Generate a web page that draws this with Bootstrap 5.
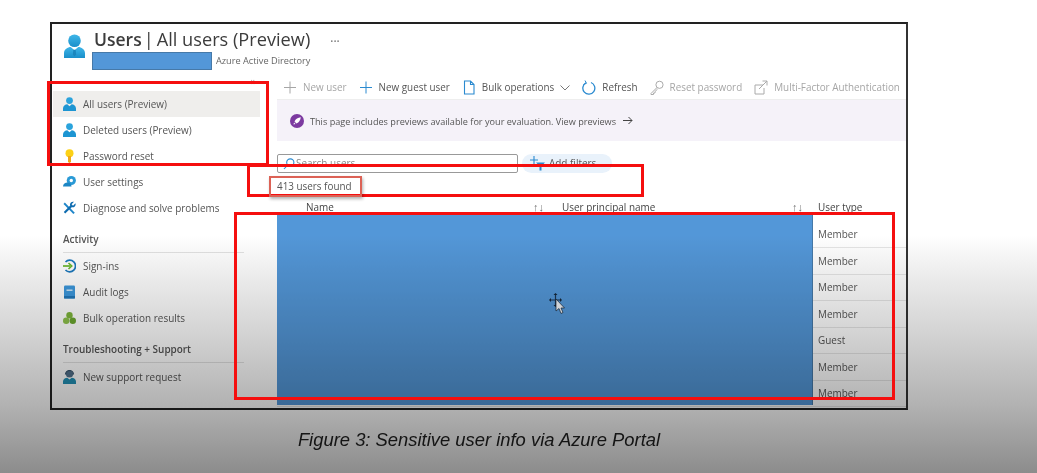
<!DOCTYPE html>
<html lang="en">
<head>
  <meta charset="UTF-8" />
  <meta name="viewport" content="width=device-width, initial-scale=1.0"/>
  <title>Users | All users (Preview)</title>
  <link href="https://cdn.jsdelivr.net/npm/bootstrap@5.3.0/dist/css/bootstrap.min.css" rel="stylesheet" />
  <style>
    html, body { height: 473px; overflow: hidden; }
    body { background: #fff; padding: 22px 129px 0 50px; font-family: "Open Sans", "Liberation Sans", sans-serif; color: #555; }

    .shot-frame { height: 388px; border: 2px solid #222; border-right-color: #333; background: #fff; overflow: hidden; filter: blur(.45px); }
    .portal-head { height: 51px; padding: 10px 0 0 12px; }
    .head-icon { width: 21px; height: 24px; margin-right: 9px; flex: none; }
    .portal-title { font-size: 18.2px; line-height: 22px; color: #3c3c3c; margin: -6px 0 0; font-weight: 400; white-space: nowrap; }
    .portal-title b { font-size: 17.5px; font-weight: 600; }
    .title-bar { margin: 0 3px 0 2px; }
    .title-dots { margin-left: 20px; font-size: 12px; color: #666; }
    .redact-name { display: inline-block; width: 120px; height: 18px; background: #5397d8; border: 1px solid #4679a8; margin: 0 4px 0 -2px; }
    .portal-sub { font-size: 9.2px; line-height: 18px; color: #666; margin-top: -1px; }

    .side-nav { width: 225px; flex: none; padding-right: 17px; }
    .collapse-mark { height: 16px; line-height: 12px; font-size: 11px; color: #aaa; text-align: right; padding-right: 5px; }
    .side-link { height: 26px; padding: 1px 0 0 11px; gap: 7px; font-size: 9.95px; color: #555; white-space: nowrap; }
    .side-link svg { width: 13px; height: 14px; flex: none; margin-top: -1px; }
    .side-link.is-current { background: #efeeec; color: #555; margin-left: 1px; padding-left: 10px; }
    .side-head { margin-left: 11px; width: 181px; height: 32px; padding-top: 8px; line-height: 20px; font-size: 9.95px; font-weight: 600; color: #555; border-bottom: 1px solid #e2e2e2; white-space: nowrap; }
    .after-head { margin-top: 1px; }

    .portal-main { min-width: 0; }
    .tool-bar { height: 25px; padding: 1px 0 0 6px; gap: 12px; font-size: 9.9px; white-space: nowrap; border-bottom: 1px solid #eee; }
    .tool-item { gap: 6px; color: #555; }
    .tool-item.is-off { color: #a6a6a6; }
    .tool-item svg { width: 14px; height: 15px; flex: none; }
    .tool-item svg.drop-arrow { width: 10px; height: 6px; }
    .plus-on { color: #2a8ad0; }
    .preview-note { height: 41px; background: #f5f2f9; padding: 2px 0 0 13px; gap: 6px; font-size: 9.15px; color: #555; white-space: nowrap; }
    .preview-note svg { width: 14px; height: 14px; margin-top: -2px; }
    .preview-note svg.go-arrow { width: 10px; height: 9px; margin-left: 1px; }
    .search-row { margin-top: 13px; height: 19px; gap: 4px; }
    .search-box { width: 241px; border: 1px solid #999; border-radius: 2px; padding-left: 5px; gap: 1px; font-size: 9.95px; color: #888; }
    .filter-pill { width: 90px; height: 19px; border-radius: 10px; background: #e9f2fb; padding-left: 8px; gap: 4px; font-size: 9.95px; color: #555; }
    .found-line { height: 24px; line-height: 26px; font-size: 9.9px; color: #555; }
    .user-table { font-size: 9.95px; table-layout: fixed; width: 630px; margin: 0; color: #555; }
    .user-table th { height: 24px; padding: 0; font-weight: 500; vertical-align: top; line-height: 20px; border: 0; color: #444; white-space: nowrap; }
    .user-table td { height: 26.5px; padding: 1px 0 0 5px; vertical-align: middle; border-bottom: 1px solid #e6e6e6; color: #555; }
    .sort-mark { float: right; padding-right: 10px; font-size: 11px; color: #777; font-weight: 400; }

    .redact-rows { position: absolute; left: 277px; top: 213px; width: 536px; height: 192px; background: #5397d8; border-right: 1px solid #4679a8; }
    .shade-layer { position: absolute; inset: 0; pointer-events: none; mix-blend-mode: multiply;
      background: linear-gradient(to bottom, #fff 0, #fff 235px, #ececec 275px, #d0d0d0 340px, #b2b2b2 405px, #8c8c8c 473px); }
    .red-mark { position: absolute; border: 3px solid #f50f0f; pointer-events: none; }
    .mark-menu { left: 47px; top: 81px; width: 222px; height: 85px; }
    .mark-search { left: 247px; top: 164px; width: 397px; height: 33px; }
    .mark-rows { left: 234px; top: 212px; width: 661px; height: 188px; }
    .found-mark { position: absolute; left: 269px; top: 176px; width: 93px; height: 21px; border: 2px solid #dc6256; box-shadow: 1px 2px 3px rgba(0,0,0,.3); pointer-events: none; }
    .move-cursor { position: absolute; left: 548px; top: 293px; width: 17px; height: 23px; }
    .fig-caption { position: relative; margin-top: 19px; text-align: center; font-family: "Liberation Sans", Arial, sans-serif; font-style: italic; font-size: 18.4px; line-height: 22px; color: #222; }
  </style>
</head>
<body class="position-relative">

  <svg width="0" height="0" class="position-absolute">
    <defs>
      <linearGradient id="blueGrad" x1="0" y1="0" x2="0" y2="1">
        <stop offset="0" stop-color="#3fb6e8"/><stop offset="1" stop-color="#1a8fca"/>
      </linearGradient>
    </defs>
    <symbol id="ico-user-big" viewBox="0 0 22 25">
      <circle cx="11" cy="7" r="6.6" fill="url(#blueGrad)"/>
      <path d="M0 25v-5c0-4 4-6.500 7-6.500l4 3.500 4-3.500c3 0 7 2.500 7 6.500v5z" fill="url(#blueGrad)"/>
      <path d="M9.800 16.500h2.400l.5 5-1.700 2-1.700-2z" fill="#1b86bd"/>
    </symbol>
    <symbol id="ico-user" viewBox="0 0 13 14">
      <circle cx="6.500" cy="3.600" r="3.400" fill="#2aa3dc"/>
      <path d="M0 14v-2.500C0 9 2.200 7.300 4.300 7.300l2.200 2 2.200-2C10.800 7.300 13 9 13 11.500V14z" fill="#1d95d2"/>
    </symbol>
    <symbol id="ico-support" viewBox="0 0 13 14">
      <circle cx="6.500" cy="4" r="3.600" fill="#51708a"/>
      <path d="M2.500 4.500a4 4 0 0 1 8 0" fill="none" stroke="#37536b" stroke-width="1.200"/>
      <path d="M0 14v-2.500C0 9.200 2.200 7.800 4.300 7.800l2.200 1.700 2.200-1.700c2.100 0 4.300 1.400 4.300 3.700V14z" fill="#2390b4"/>
    </symbol>
    <symbol id="ico-key" viewBox="0 0 13 14">
      <circle cx="6.500" cy="4.200" r="4" fill="#fcd116"/>
      <path d="M5 7h3v6l-1.500 1L5 13z" fill="#f0a81a"/>
    </symbol>
    <symbol id="ico-gear" viewBox="0 0 13 14">
      <circle cx="8.300" cy="5.500" r="4.600" fill="#2a9ad6"/>
      <circle cx="8.300" cy="5.500" r="1.700" fill="#fff"/>
      <path d="M0 11.500c0-2.800 2.300-4 4.500-4s4 1.500 4 4z" fill="#1c86c4"/>
    </symbol>
    <symbol id="ico-tools" viewBox="0 0 13 14">
      <path d="M1.800 1.500l10 10.200-1.400 1.400L.5 3z" fill="#1f86c9"/>
      <path d="M12.500 2.200L10 4.700 8.600 3.300 11 .8C9 .2 7 1.500 7 3.500c0 .4 0 .7.200 1L.8 11l1.400 1.600 6.500-6.400c2.300.8 4.500-1.500 3.800-4z" fill="#0f6cb0"/>
    </symbol>
    <symbol id="ico-signin" viewBox="0 0 13 14">
      <path d="M2.500 3a5.800 5.800 0 1 1 0 8" fill="none" stroke="#1b78bd" stroke-width="1.700"/>
      <path d="M0 7h7.500" stroke="#68b82e" stroke-width="1.700"/>
      <path d="M5.500 4l3.200 3-3.200 3" fill="none" stroke="#68b82e" stroke-width="1.700"/>
    </symbol>
    <symbol id="ico-book" viewBox="0 0 13 14">
      <rect x="1" y="0.500" width="11" height="13" rx="1.200" fill="#3b97dc"/>
      <rect x="3.500" y="4.500" width="6" height="1.400" fill="#d6ecfa"/>
      <rect x="1" y="11" width="11" height="2.500" fill="#1f76b8"/>
    </symbol>
    <symbol id="ico-bulk" viewBox="0 0 13 14">
      <circle cx="6.500" cy="4.300" r="3.200" fill="#7cb43a"/>
      <circle cx="3.200" cy="9.800" r="3.200" fill="#8cc04a"/>
      <circle cx="9.800" cy="9.800" r="3.200" fill="#6aa62e"/>
    </symbol>
    <symbol id="ico-plus" viewBox="0 0 14 15">
      <path d="M7 1.500v12M1 7.500h12" fill="none" stroke="currentColor" stroke-width="1"/>
    </symbol>
    <symbol id="ico-doc" viewBox="0 0 14 15">
      <path d="M2.500 1h6l3.500 3.500V14h-9.500z M8.500 1v3.500H12" fill="none" stroke="#2a8ad0" stroke-width="1.100"/>
    </symbol>
    <symbol id="ico-refresh" viewBox="0 0 14 15">
      <path d="M4 2.800A6 6 0 1 0 9 2.500" fill="none" stroke="#2a8ad0" stroke-width="1.300"/>
      <path d="M3 0.500l1.500 2.800L1.500 4.500" fill="none" stroke="#2a8ad0" stroke-width="1"/>
    </symbol>
    <symbol id="ico-keyline" viewBox="0 0 14 15">
      <circle cx="9.500" cy="4.800" r="3.600" fill="none" stroke="#aaa" stroke-width="1"/>
      <path d="M7 7.500L1 13.500v1h2.500v-1.500H5v-1.500l2.500-2.300" fill="none" stroke="#aaa" stroke-width="1"/>
    </symbol>
    <symbol id="ico-ext" viewBox="0 0 14 15">
      <path d="M9 5H1v9h9V8" fill="none" stroke="#aaa" stroke-width="1"/>
      <path d="M5 9l8-8M8.500 1H13v4.500" fill="none" stroke="#aaa" stroke-width="1"/>
    </symbol>
    <symbol id="ico-rocket" viewBox="0 0 14 14">
      <circle cx="7" cy="7" r="7" fill="#7c3aa0"/>
      <path d="M10.800 3.200C8 3.500 5.500 5 4.500 7.500L6.500 9.500C9 8.500 10.500 6 10.800 3.200z" fill="#fff"/>
      <path d="M4 8.500l1.500 1.500-2 .5z" fill="#fff"/>
    </symbol>
    <symbol id="ico-search" viewBox="0 0 12 12">
      <circle cx="7.300" cy="4.500" r="3.600" fill="none" stroke="#2a8ad0" stroke-width="1.100"/>
      <path d="M4.700 7L1 11" stroke="#2a8ad0" stroke-width="1.100"/>
    </symbol>
    <symbol id="ico-filter" viewBox="0 0 15 15">
      <path d="M4 0v8M0 4h8" stroke="#2a8ad0" stroke-width="1.100"/>
      <path d="M6 6.500h9l-3.500 3.500v4.500h-2V10z" fill="#2a8ad0"/>
    </symbol>
  </svg>

  <div class="shot-frame d-flex flex-column">
    <header class="portal-head d-flex">
      <svg class="head-icon"><use href="#ico-user-big"/></svg>
      <div>
        <h1 class="portal-title"><b>Users</b><span class="title-bar">|</span>All users (Preview)<span class="title-dots">···</span></h1>
        <div class="portal-sub d-flex align-items-center"><span class="redact-name"></span>Azure Active Directory</div>
      </div>
    </header>

    <div class="d-flex flex-grow-1">
      <nav class="side-nav">
        <div class="collapse-mark">«</div>
        <a class="side-link is-current d-flex align-items-center text-decoration-none" href="#"><svg><use href="#ico-user"/></svg>All users (Preview)</a>
        <a class="side-link d-flex align-items-center text-decoration-none" href="#"><svg><use href="#ico-user"/></svg>Deleted users (Preview)</a>
        <a class="side-link d-flex align-items-center text-decoration-none" href="#"><svg><use href="#ico-key"/></svg>Password reset</a>
        <a class="side-link d-flex align-items-center text-decoration-none" href="#"><svg><use href="#ico-gear"/></svg>User settings</a>
        <a class="side-link d-flex align-items-center text-decoration-none" href="#"><svg><use href="#ico-tools"/></svg>Diagnose and solve problems</a>
        <div class="side-head">Activity</div>
        <a class="side-link d-flex align-items-center text-decoration-none" href="#"><svg><use href="#ico-signin"/></svg>Sign-ins</a>
        <a class="side-link d-flex align-items-center text-decoration-none" href="#"><svg><use href="#ico-book"/></svg>Audit logs</a>
        <a class="side-link d-flex align-items-center text-decoration-none" href="#"><svg><use href="#ico-bulk"/></svg>Bulk operation results</a>
        <div class="side-head">Troubleshooting + Support</div>
        <a class="side-link after-head d-flex align-items-center text-decoration-none" href="#"><svg><use href="#ico-support"/></svg>New support request</a>
      </nav>

      <main class="portal-main flex-grow-1">
        <div class="tool-bar d-flex align-items-center">
          <span class="tool-item is-off d-flex align-items-center"><svg><use href="#ico-plus"/></svg>New user</span>
          <span class="tool-item d-flex align-items-center"><svg class="plus-on"><use href="#ico-plus"/></svg>New guest user</span>
          <span class="tool-item d-flex align-items-center"><svg><use href="#ico-doc"/></svg>Bulk operations<svg class="drop-arrow" viewBox="0 0 10 6"><path d="M.5.500L5 5 9.500.500" fill="none" stroke="#777"/></svg></span>
          <span class="tool-item d-flex align-items-center"><svg><use href="#ico-refresh"/></svg>Refresh</span>
          <span class="tool-item is-off d-flex align-items-center"><svg><use href="#ico-keyline"/></svg>Reset password</span>
          <span class="tool-item is-off d-flex align-items-center"><svg><use href="#ico-ext"/></svg>Multi-Factor Authentication</span>
        </div>
        <div class="preview-note d-flex align-items-center">
          <svg><use href="#ico-rocket"/></svg>This page includes previews available for your evaluation. View previews<svg class="go-arrow" viewBox="0 0 10 9"><path d="M0 4.500h9M5.500 1l3.500 3.500L5.500 8" fill="none" stroke="#444"/></svg>
        </div>
        <div class="search-row d-flex">
          <div class="search-box d-flex align-items-center"><svg width="12" height="12"><use href="#ico-search"/></svg>Search users</div>
          <div class="filter-pill d-flex align-items-center"><svg width="15" height="15"><use href="#ico-filter"/></svg>Add filters</div>
        </div>
        <div class="found-line">413 users found</div>
        <table class="table user-table">
          <colgroup><col style="width:277px"><col style="width:259px"><col></colgroup>
          <thead>
            <tr><th style="padding-left:29px">Name<span class="sort-mark">↑↓</span></th><th class="ps-2">User principal name<span class="sort-mark">↑↓</span></th><th style="padding-left:5px">User type</th></tr>
          </thead>
          <tbody>
            <tr><td></td><td></td><td>Member</td></tr>
            <tr><td></td><td></td><td>Member</td></tr>
            <tr><td></td><td></td><td>Member</td></tr>
            <tr><td></td><td></td><td>Member</td></tr>
            <tr><td></td><td></td><td>Guest</td></tr>
            <tr><td></td><td></td><td>Member</td></tr>
            <tr><td></td><td></td><td>Member</td></tr>
          </tbody>
        </table>
      </main>
    </div>
  </div>

  <div class="redact-rows"></div>
  <svg class="move-cursor" viewBox="0 0 17 23">
    <path d="M7.500 2v10M2 7h11" stroke="#1c3550" stroke-width="1.200"/>
    <path d="M7.500 0l2 2h-4zM7.500 14l2-2h-4zM1 7l2-2v4zM14 7l-2-2v4z" fill="#14263a"/>
    <path d="M8 6v12l3-2.500 2 5 2-1-2-4.500h3.500z" fill="#eef2f6" stroke="#14263a" stroke-width=".7"/>
  </svg>

  <figcaption class="fig-caption">Figure 3: Sensitive user info via Azure Portal</figcaption>

  <div class="shade-layer"></div>
  <div class="red-mark mark-menu"></div>
  <div class="red-mark mark-search"></div>
  <div class="red-mark mark-rows"></div>
  <div class="found-mark"></div>

  <script src="https://cdn.jsdelivr.net/npm/bootstrap@5.3.0/dist/js/bootstrap.bundle.min.js"></script>
</body>
</html>
